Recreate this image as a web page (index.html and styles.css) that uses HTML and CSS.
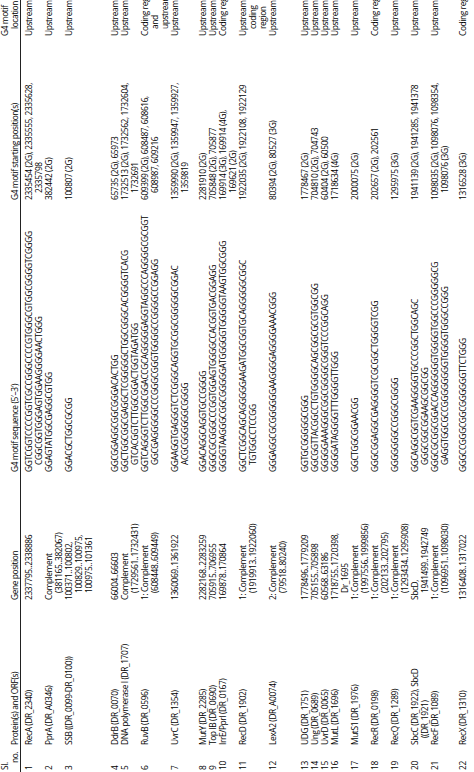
FILE: index.html
```html
<!DOCTYPE html>
<html>
<head>
<meta charset="utf-8">
<link rel="stylesheet" href="styles.css">
</head>
<body>
<div class="viewport">
<div class="sheet">
<table class="g4">
<colgroup><col class="c-no"><col class="c-prot"><col class="c-gene"><col class="c-seq"><col class="c-start"><col class="c-loc"></colgroup>
<thead>
<tr><th>Sl.<br>no.</th><th>Protein(s) and ORF(s)</th><th>Gene position</th><th>G4 motif sequence (5′–3′)</th><th>G4 motif starting position(s)</th><th>G4 motif<br>location</th></tr>
</thead>
<tbody>
<tr class="first"><td>1</td><td>RecA (DR_2340)</td><td>2337795..2338886</td><td>GGTCGGTCCCCGGTCGCCGGGCCCCGTGGGCGTGGCGGGGTCGGGG<br>CGGCGGTGGGAGTGGAAGGGGAACTGGG</td><td>2335454 (2G), 2335555, 2335628,<br>2335798</td><td>Upstream</td></tr>
<tr><td>2</td><td>PprA (DR_A0346)</td><td>Complement<br>(381165..382067)</td><td>GGAGTATGGCGAGGCGTGG</td><td>382442 (2G)</td><td>Upstream</td></tr>
<tr class="gap16"><td>3</td><td>SSB ((DR_0099-DR_0100))</td><td>100371..100802,<br>100829..100975,<br>100975..101361</td><td>GGACGCTGGCGCGG</td><td>100807 (2G)</td><td>Upstream</td></tr>
<tr><td>4</td><td>DdrB (DR_0070)</td><td>66004..66603</td><td>GGCGGAGGCGGCGGGACACTGG</td><td>65735 (2G), 65973</td><td>Upstream</td></tr>
<tr><td>5</td><td>DNA polymerase I (DR_1707)</td><td>Complement<br>(1729561..1732431)</td><td>GGCTGGCGGCGAGGCTCGGGGGCTGGCGGGCACGGGGTCACG<br>GTCACGGTCTTGGCGGACTGGTAGATGG</td><td>1732513 (2G), 1732562, 1732604,<br>1732691</td><td>Upstream</td></tr>
<tr><td>6</td><td>RuvB (DR_0596)</td><td>1: Complement<br>(608448..609449)</td><td>GGTCAGGGTCTTGGCGGACCGCAGGGGGAGGTAGGCCCAGGGGCGCGGT<br>GGCGAGGGGGCCCGGGCGGGTGGGGCCGGGGCCGGAGG</td><td>609399 (2G), 608487, 608616,<br>608987, 609216</td><td>Coding region<br>and<br>upstream</td></tr>
<tr class="gap8"><td>7</td><td>UvrC (DR_1354)</td><td>1360069..1361922</td><td>GGAAGGTGAGGGTCTCGGGCAGGTGCGGCGGGGGCGGAC<br>ACGCGGGGGGCGGGG</td><td>1359990 (2G), 1359947, 1359927,<br>1359819</td><td>Upstream</td></tr>
<tr><td>8</td><td>MutY (DR_2285)</td><td>2282168..2283259</td><td>GGACAGGCAGGTGCCGGGG</td><td>2281910 (2G)</td><td>Upstream</td></tr>
<tr><td>9</td><td>Top IB (DR_0690)</td><td>705915..706955</td><td>GGGCGCGGGCCCGGTGGAGTGGGGCCACGGTGACGGAGG</td><td>705848 (2G), 705877</td><td>Upstream</td></tr>
<tr><td>10</td><td>IrrE/PprI (DR_0167)</td><td>169878..170864</td><td>GGGGTAAGGGCGGCGGGGGATGGGGGTGGGGGTAAGTGGCGGG</td><td>169914 (3G), 169914 (4G),<br>169621 (2G)</td><td>Coding region</td></tr>
<tr><td>11</td><td>RecD (DR_1902)</td><td>1: Complement<br>(1919913..1922060)</td><td>GGCTCGGCAGCAGGGGGAAGATGGCGGTGCAGGGGGCGGC<br>TGTGGCCTCCGG</td><td>1922035 (2G), 1922108, 1922129</td><td>Upstream and<br>coding<br>region</td></tr>
<tr class="gap12"><td>12</td><td>LexA2 (DR_A0074)</td><td>2: Complement<br>(79518..80240)</td><td>GGGAGGCGCGGGGGGAAGGGGAGGGGAAACGGG</td><td>80394 (2G), 80527 (3G)</td><td>Upstream</td></tr>
<tr><td>13</td><td>UDG (DR_1751)</td><td>1778496..1779209</td><td>GGTGCGGGGGCGGG</td><td>1778467 (2G)</td><td>Upstream</td></tr>
<tr><td>14</td><td>Ung (DR_0689)</td><td>705155..705898</td><td>GGCGGTTACGGCCTGTGGGGCAGCGGCGCGTGGCGG</td><td>704810 (2G), 704743</td><td>Upstream</td></tr>
<tr><td>15</td><td>UvrD (DR_0065)</td><td>60568..63186</td><td>GGGGGAAAGGGCGGCGGGGCGGGTCCCGGCAGG</td><td>60404 (2G), 60500</td><td>Upstream</td></tr>
<tr><td>16</td><td>MutL (DR_1696)</td><td>1718755..1720398,<br>Dr_1695</td><td>GGGGATAGGGGTTTGGGGTTGGG</td><td>1718634 (4G)</td><td>Upstream</td></tr>
<tr><td>17</td><td>MutS1 (DR_1976)</td><td>1: Complement<br>(1997556..1999856)</td><td>GGCTGGCGGAACGG</td><td>2000075 (2G)</td><td>Upstream</td></tr>
<tr><td>18</td><td>RecR (DR_0198)</td><td>1: Complement<br>(202133..202795)</td><td>GGGCGGAGGCGAGGGGTCGCGGCTGGGGTCGG</td><td>202657 (2G), 202561</td><td>Coding region</td></tr>
<tr><td>19</td><td>RecQ (DR_1289)</td><td>1: Complement<br>(1293434..1295908)</td><td>GGGGGGGCCGGGCGGGG</td><td>1295975 (3G)</td><td>Upstream</td></tr>
<tr><td>20</td><td>SbcC (DR_1922), SbcD<br>((DR_1921)</td><td>SbcD,<br>1941499..1942749</td><td>GGCAGGCGGTCGAAGGGGTGCCCGGCTGGCAGC<br>GGGCGGCGGAAGCGGCGG</td><td>1941139 (2G), 1941285, 1941378</td><td>Upstream</td></tr>
<tr class="gap8"><td>21</td><td>RecF (DR_1089)</td><td>1: Complement<br>(1096951..1098030)</td><td>GGGCGCGGCGGACCAGGGGGGTGGGGTGGCCCGGGGGCG<br>GAGGTGGCGCCGGGGGGGGTGGGGTGGGCCGGG</td><td>1098035 (2G), 1098076, 1098354,<br>1098076 (3G)</td><td>Upstream</td></tr>
<tr><td>22</td><td>RecX (DR_1310)</td><td>1316408..1317022</td><td>GGGCCGGGCGGCGGGGGGTTCTGGG</td><td>1316528 (3G)</td><td>Coding region</td></tr>
</tbody>
</table>
</div>
</div>
</body>
</html>
```

FILE: styles.css
```css
html, body {
  margin: 0;
  padding: 0;
  background: #ffffff;
}

.viewport {
  width: 474px;
  height: 772px;
  overflow: hidden;
}

.sheet {
  width: 830px;
  height: 474px;
  transform-origin: 0 0;
  transform: translateY(772px) rotate(-90deg);
}

.g4 {
  border-collapse: collapse;
  table-layout: fixed;
  width: 830px;
  font-family: "Open Sans", "Noto Sans", sans-serif;
  font-size: 8.4px;
  line-height: 10px;
  letter-spacing: -0.4px;
  color: #000000;
}

.c-no { width: 25px; }
.c-prot { width: 145px; }
.c-gene { width: 128px; }
.c-seq { width: 272px; }
.c-start { width: 164px; }
.c-loc { width: 96px; }

.g4 th,
.g4 td {
  padding: 0 0 0 9px;
  text-indent: -7px;
  text-align: left;
  vertical-align: top;
  white-space: nowrap;
  font-weight: 500;
}

.g4 th {
  vertical-align: bottom;
  border-bottom: 1px solid #222222;
}

.g4 tr.first td { padding-top: 3px; }
.g4 tr.gap8 td { padding-bottom: 8px; }
.g4 tr.gap12 td { padding-bottom: 12px; }
.g4 tr.gap16 td { padding-bottom: 16px; }
```
